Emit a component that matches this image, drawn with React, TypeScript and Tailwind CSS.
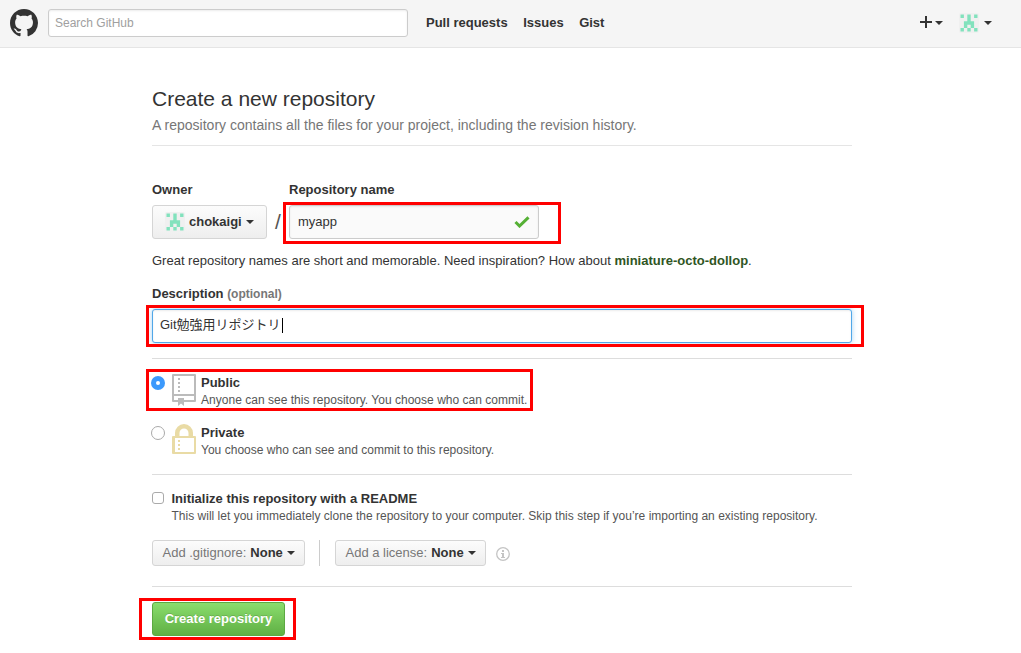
import type { ReactNode } from "react";

function Caret({ className = "" }: { className?: string }) {
  return (
    <svg className={"h-1 w-2 shrink-0 " + className} viewBox="0 0 8 4" fill="currentColor">
      <path d="M0 0h8L4 4z" />
    </svg>
  );
}

function Identicon({ className = "" }: { className?: string }) {
  return (
    <svg className={"shrink-0 " + className} viewBox="0 0 20 20">
      <rect width="20" height="20" rx="2" fill="#f0f0f0" />
      <path
        fill="#82e2bd"
        d="M1.5 1.5h3.4v3.4H1.5zM8.3 1.5h3.4v6.8h3.4v6.8h-3.4v-3.4H8.3v3.4H4.9V8.3h3.4zM15.1 1.5h3.4v3.4h-3.4zM1.5 15.1h3.4v3.4H1.5zM8.3 15.1h3.4v3.4H8.3zM15.1 15.1h3.4v3.4h-3.4z"
      />
    </svg>
  );
}

function Highlight({ className }: { className: string }) {
  return <div className={"pointer-events-none absolute border-3 border-[#ff0000] " + className} />;
}

function MenuButton({ className, children }: { className: string; children: ReactNode }) {
  return (
    <button
      className={
        "flex items-center whitespace-nowrap rounded-[3px] border border-[#d5d5d5] bg-linear-to-b from-[#fcfcfc] to-[#eeeeee] text-[13px] text-[#333] " +
        className
      }
    >
      {children}
    </button>
  );
}

function Header() {
  return (
    <header className="flex h-12 items-start border-b border-[#e5e5e5] bg-[#f5f5f5] pl-2.5">
      <svg className="mt-[9px] h-7 w-7 shrink-0" viewBox="0 0 16 16" fill="#333">
        <path d="M8 0C3.58 0 0 3.58 0 8c0 3.54 2.29 6.53 5.47 7.59.4.07.55-.17.55-.38 0-.19-.01-.82-.01-1.49-2.01.37-2.53-.49-2.69-.94-.09-.23-.48-.94-.82-1.13-.28-.15-.68-.52-.01-.53.63-.01 1.08.58 1.23.82.72 1.21 1.87.87 2.33.66.07-.52.28-.87.51-1.07-1.78-.2-3.64-.89-3.64-3.95 0-.87.31-1.59.82-2.15-.08-.2-.36-1.02.08-2.12 0 0 .67-.21 2.2.82.64-.18 1.32-.27 2-.27s1.36.09 2 .27c1.53-1.04 2.2-.82 2.2-.82.44 1.1.16 1.92.08 2.12.51.56.82 1.27.82 2.15 0 3.07-1.87 3.75-3.65 3.95.29.25.54.73.54 1.48v2.2c0 .21.15.46.55.38A8.01 8.01 0 0 0 16 8c0-4.42-3.58-8-8-8z" />
      </svg>
      <div className="ml-2.5 mt-[9px] flex h-7 w-[360px] items-center rounded-[3px] border border-[#ccc] bg-white px-1.5 text-xs text-[#a0a0a0] shadow-[inset_0_1px_2px_rgba(0,0,0,0.075)]">
        Search GitHub
      </div>
      <nav className="ml-[18px] mt-[13px] flex gap-[15.5px] text-[13px] leading-5 font-bold text-[#333]">
        <a>Pull requests</a>
        <a>Issues</a>
        <a>Gist</a>
      </nav>
      <div className="ml-auto mr-[29px] flex items-start text-[#333]">
        <svg className="mt-4 h-3 w-3" viewBox="0 0 12 12" fill="currentColor">
          <path d="M5 0h2v5h5v2H7v5H5V7H0V5h5z" />
        </svg>
        <Caret className="ml-[3px] mt-[21px]" />
        <Identicon className="ml-4 mt-[13px] h-5 w-5" />
        <Caret className="ml-[5px] mt-[21px]" />
      </div>
    </header>
  );
}

export default function App() {
  return (
    <div className="h-[653px] overflow-hidden bg-white font-['Liberation_Sans','Noto_Sans_CJK_JP',sans-serif] text-[13px] text-[#333]">
      <Header />
      <main className="ml-[152px] w-[700px] whitespace-nowrap">
        <div className="h-[98px] border-b border-[#e5e5e5] pt-[37px]">
          <h1 className="text-[21px] leading-7">Create a new repository</h1>
          <p className="mt-0.5 text-sm leading-5 tracking-[0.012px] text-[#767676]">
            A repository contains all the files for your project, including the revision history.
          </p>
        </div>

        <div className="flex pt-[34px]">
          <div className="w-[115px]">
            <div className="leading-5 font-bold">Owner</div>
            <MenuButton className="mt-[5px] h-[34px] w-[115px] pl-3 font-bold">
              <Identicon className="h-5 w-5" />
              <span className="ml-1">chokaigi</span>
              <Caret className="ml-1" />
            </MenuButton>
          </div>
          <div className="w-[22px] pt-[25px] text-center text-[21px] leading-[34px] text-[#555]">/</div>
          <div className="w-[250px]">
            <div className="leading-5 font-bold">Repository name</div>
            <div className="relative mt-[5px] flex h-[34px] items-center justify-between rounded-[3px] border border-[#ccc] bg-[#fafafa] pr-2 pl-2 shadow-[inset_0_1px_2px_rgba(0,0,0,0.075)]">
              <span>myapp</span>
              <svg className="h-3 w-4" viewBox="0 0 16 12" fill="none" stroke="#55b035" strokeWidth="3">
                <path d="M1.5 6l4 4L14.5 1.3" />
              </svg>
              <Highlight className="-top-1 -left-[7px] h-[42px] w-[278px]" />
            </div>
          </div>
        </div>

        <p className="mt-3 leading-5">
          Great repository names are short and memorable. Need inspiration? How about{" "}
          <strong className="text-[#2f5523]">miniature-octo-dollop</strong>.
        </p>

        <div className="mt-[13px] leading-5 font-bold">
          Description <span className="text-xs leading-none text-[#777]">(optional)</span>
        </div>
        <div className="relative mt-[5px] flex h-[34px] items-center rounded-[3px] border border-[#51a7e8] bg-white pb-0.5 pl-[7px] shadow-[inset_0_1px_2px_rgba(0,0,0,0.075),0_0_5px_rgba(81,167,232,0.5)]">
          <span>Git勉強用リポジトリ</span>
          <span className="ml-px h-[15px] w-px bg-black" />
          <Highlight className="-top-[5px] -left-[7px] h-[42px] w-[718px]" />
        </div>

        <div className="mt-[15px] flex h-[117px] flex-col border-y border-[#ddd] pt-[13px]">
          <div className="relative flex h-[50px]">
            <span className="mt-1 -ml-px flex h-3.5 w-3.5 items-center justify-center rounded-full bg-[#3b99fc]">
              <span className="h-1 w-1 rounded-full bg-white" />
            </span>
            <svg className="ml-[7px] mt-0.5 h-8 w-6" viewBox="0 0 24 32" fill="#bbb">
              <path fillRule="evenodd" d="M1 0h22q1 0 1 1v26q0 1-1 1H12v4l-3-2.5L6 32v-4H1q-1 0-1-1V1q0-1 1-1zM2 2v18h20V2zM2 22v4h4v-2h6v2h10v-4z" />
              <path d="M6 4h2v2H6zM6 8h2v2H6zM6 12h2v2H6zM6 16h2v2H6z" />
            </svg>
            <div className="ml-[5px] pt-px">
              <div className="leading-5 font-bold">Public</div>
              <div className="text-xs leading-[15px] tracking-[0.02px] text-[#555]">
                Anyone can see this repository. You choose who can commit.
              </div>
            </div>
            <Highlight className="-top-[3px] -left-1.5 h-[42px] w-[387px]" />
          </div>
          <div className="flex">
            <span className="mt-1 -ml-px h-3.5 w-3.5 rounded-full border border-[#aaa] bg-white" />
            <svg className="ml-[7px] mt-0.5 h-[30px] w-6" viewBox="0 0 24 30" fill="#e9dba5">
              <path fillRule="evenodd" d="M3 12V9a9 9 0 0 1 18 0v3h2q1 0 1 1v16q0 1-1 1H1q-1 0-1-1V13q0-1 1-1zM7.5 12h9V9A4.5 4.5 0 0 0 7.5 9zM3 14v14h19V14z" />
              <path d="M6 16h2v2H6zM6 20h2v2H6zM6 24h2v2H6z" />
            </svg>
            <div className="ml-[5px] pt-px">
              <div className="leading-5 font-bold">Private</div>
              <div className="text-xs leading-[15px] tracking-[0.02px] text-[#555]">
                You choose who can see and commit to this repository.
              </div>
            </div>
          </div>
        </div>

        <div className="h-[112px] border-b border-[#ddd] pt-[13px]">
          <div className="flex">
            <span className="mt-1 h-3 w-3 rounded-[3px] border border-[#aaa] bg-white" />
            <div className="ml-[7.5px] pt-px">
              <div className="leading-5 font-bold">Initialize this repository with a README</div>
              <div className="text-xs leading-[15px] tracking-[0.01px] text-[#555]">
                This will let you immediately clone the repository to your computer. Skip this step if you’re importing an existing repository.
              </div>
            </div>
          </div>
          <div className="mt-4 flex h-[26px]">
            <MenuButton className="h-[26px] w-[153px] pl-[9.5px]">
              <span className="text-[#777]">Add .gitignore:</span>
              <strong className="ml-1">None</strong>
              <Caret className="ml-1" />
            </MenuButton>
            <span className="ml-3.5 h-[26px] w-px bg-[#ccc]" />
            <MenuButton className="ml-[15px] h-[26px] w-[151px] pl-[9.5px]">
              <span className="text-[#777]">Add a license:</span>
              <strong className="ml-1">None</strong>
              <Caret className="ml-1" />
            </MenuButton>
            <svg className="mt-[7px] ml-2.5 h-3.5 w-3.5" viewBox="0 0 14 14" fill="#c4c4c4">
              <circle cx="7" cy="7" r="6.3" fill="none" stroke="#c4c4c4" strokeWidth="1.3" />
              <path d="M6 3h2v2H6zM5 6h3v4h1v1H5v-1h1V7H5z" />
            </svg>
          </div>
        </div>

        <div className="relative mt-[15px] w-[133px]">
          <button className="flex h-[34px] w-[133px] items-center justify-center rounded-[3px] border border-[#5ca941] bg-linear-to-b from-[#8add6d] to-[#60b044] text-[13px] font-bold text-white [text-shadow:0_-1px_0_rgba(0,0,0,0.15)]">
            Create repository
          </button>
          <Highlight className="-top-1 -left-[13px] h-[42px] w-[157px]" />
        </div>
      </main>
    </div>
  );
}
